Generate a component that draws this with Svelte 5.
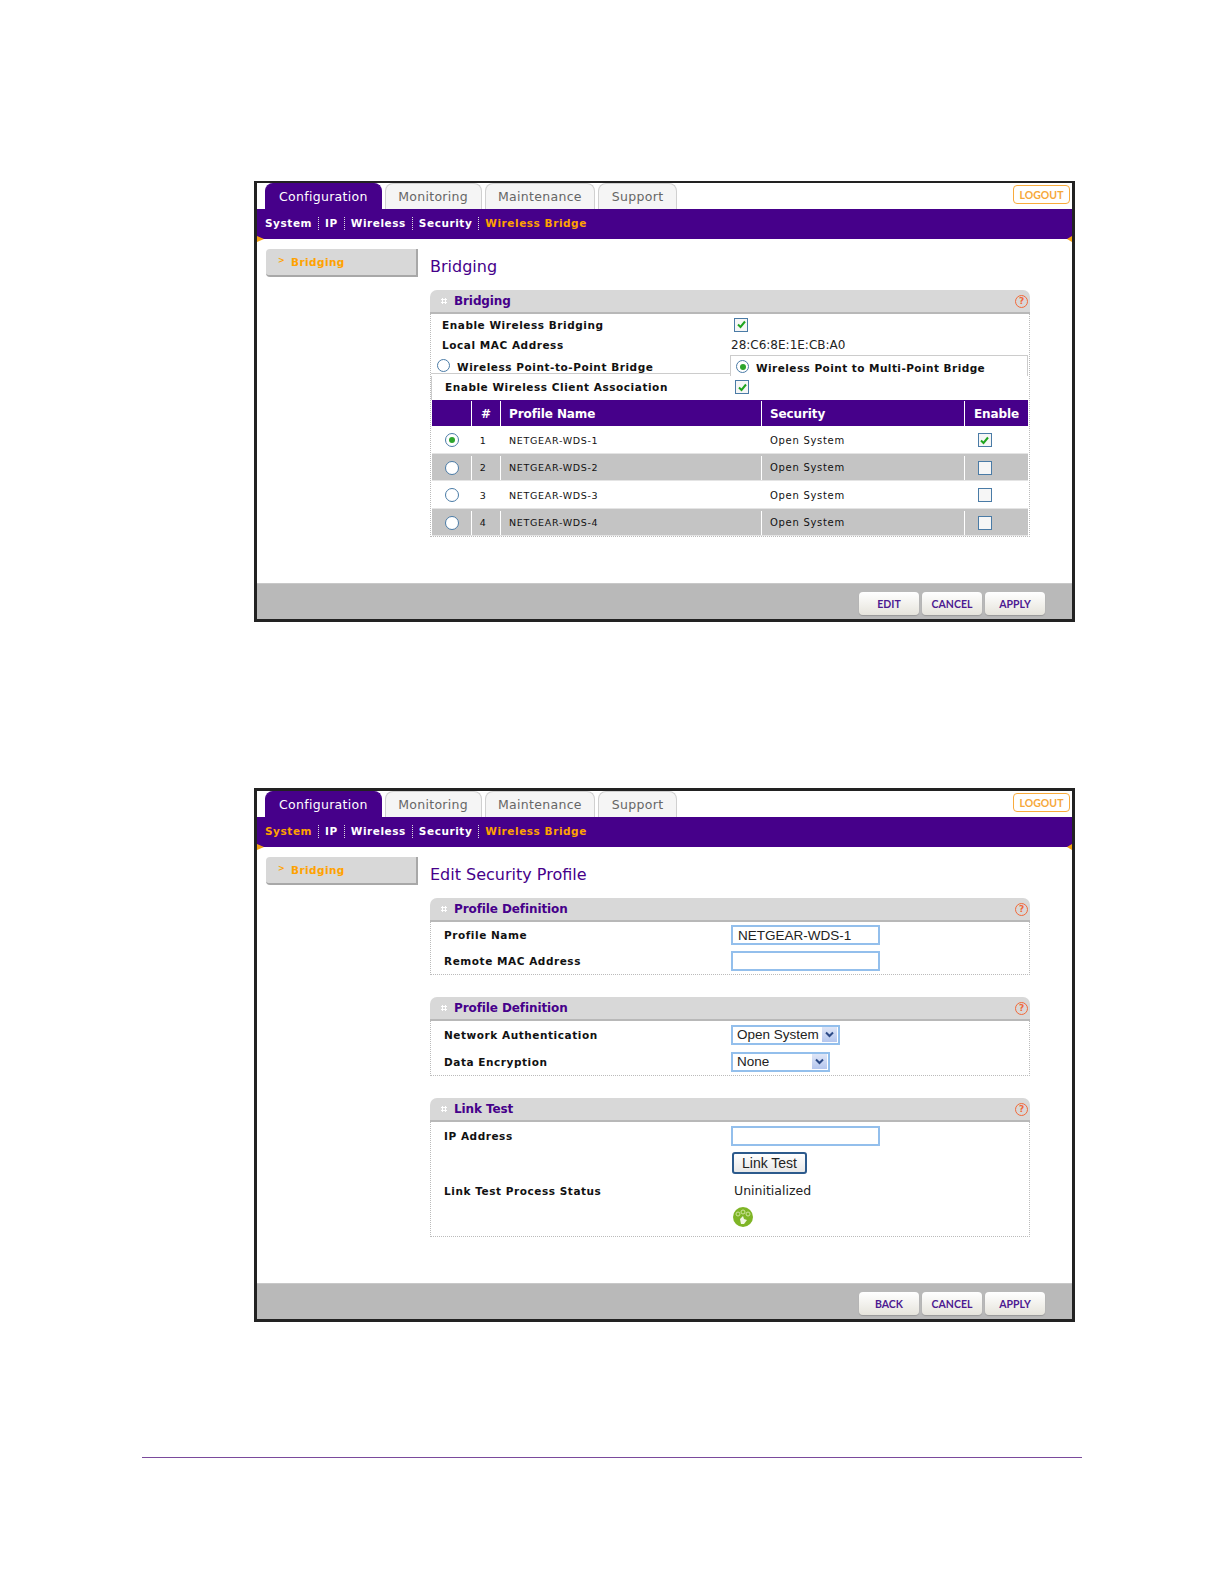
<script>
  const tabs = ['Monitoring', 'Maintenance', 'Support'];
  const subnav = ['System', 'IP', 'Wireless', 'Security', 'Wireless Bridge'];
  const profiles = [1, 2, 3, 4].map((n) => ({
    n,
    name: `NETGEAR-WDS-${n}`,
    security: 'Open System',
    selected: n === 1,
    enabled: n === 1
  }));
</script>

{#snippet check(on)}
  <span class="check">
    {#if on}
      <svg width="9" height="9" viewBox="0 0 9 9"><path d="M1 4.5L3.5 7L8 1.5" fill="none" stroke="#1fa51f" stroke-width="2" /></svg>
    {/if}
  </span>
{/snippet}

{#snippet radio(on)}
  <span class="radio">{#if on}<span class="dot"></span>{/if}</span>
{/snippet}

{#snippet chevron()}
  <span class="arrow">
    <svg width="9" height="7" viewBox="0 0 9 7"><path d="M1 1.5L4.5 5L8 1.5" fill="none" stroke="#2c4a86" stroke-width="2" /></svg>
  </span>
{/snippet}

{#snippet panel(title, body)}
  <section class="panel">
    <header class="panel-head">
      <span class="grip"></span>
      <span class="panel-title">{title}</span>
      <span class="help">?</span>
    </header>
    <div class="panel-body">{@render body()}</div>
  </section>
{/snippet}

{#snippet win(title, systemActive, primary, content)}
  <div class="window" class:second={systemActive}>
    <div class="tabs">
      <span class="tab active">Configuration</span>
      {#each tabs as t}<span class="tab">{t}</span>{/each}
      <span class="logout">LOGOUT</span>
    </div>
    <nav class="subnav">
      {#each subnav as item, i}
        {#if i > 0}<span class="sep"></span>{/if}
        <span class="sublink" class:on={item === 'Wireless Bridge' || (systemActive && item === 'System')}>{item}</span>
      {/each}
    </nav>
    <div class="main">
      <aside class="side"><span class="chev">&gt;</span>Bridging</aside>
      <div class="content">
        <h1>{title}</h1>
        {@render content()}
      </div>
    </div>
    <footer class="foot">
      <button class="btn">{primary}</button>
      <button class="btn">CANCEL</button>
      <button class="btn">APPLY</button>
    </footer>
  </div>
{/snippet}

{#snippet bridgingBody()}
  <div class="row-a">
    <span class="label">Enable Wireless Bridging</span>
    {@render check(true)}
  </div>
  <div class="row-b">
    <span class="label">Local MAC Address</span>
    <span class="value">28:C6:8E:1E:CB:A0</span>
  </div>
  <div class="modes">
    <div class="mode">{@render radio(false)}<span class="label">Wireless Point-to-Point Bridge</span></div>
    <div class="mode current">{@render radio(true)}<span class="label">Wireless Point to Multi-Point Bridge</span></div>
  </div>
  <div class="assoc">
    <span class="label">Enable Wireless Client Association</span>
    {@render check(true)}
  </div>
  <div class="table">
    <div class="tr th">
      <span></span><span class="c">#</span><span>Profile Name</span><span>Security</span><span class="c enable">Enable</span>
    </div>
    {#each profiles as p}
      <div class="tr td" class:alt={p.n % 2 === 0}>
        <span class="c">{@render radio(p.selected)}</span>
        <span class="c num">{p.n}</span>
        <span>{p.name}</span>
        <span class="sec">{p.security}</span>
        <span class="c tick">{@render check(p.enabled)}</span>
      </div>
    {/each}
  </div>
{/snippet}

{#snippet bridging()}
  {@render panel('Bridging', bridgingBody)}
{/snippet}

{#snippet defBody()}
  <div class="form-row h26"><span class="label">Profile Name</span><input class="field" value="NETGEAR-WDS-1" /></div>
  <div class="form-row h26"><span class="label">Remote MAC Address</span><input class="field" value="" /></div>
{/snippet}

{#snippet authBody()}
  <div class="form-row h27">
    <span class="label">Network Authentication</span>
    <span class="select w110">Open System{@render chevron()}</span>
  </div>
  <div class="form-row h27">
    <span class="label">Data Encryption</span>
    <span class="select w100">None{@render chevron()}</span>
  </div>
{/snippet}

{#snippet linkBody()}
  <div class="form-row h28"><span class="label">IP Address</span><input class="field" value="" /></div>
  <div class="form-row h26"><span></span><button class="linktest">Link Test</button></div>
  <div class="form-row h29"><span class="label">Link Test Process Status</span><span class="value status">Uninitialized</span></div>
  <div class="form-row h24">
    <span></span>
    <svg class="linkicon" width="20" height="20" viewBox="0 0 20 20">
      <circle cx="10" cy="10" r="10" fill="#7fb526" />
      <circle cx="5" cy="7" r="2" fill="none" stroke="#cfe59c" stroke-width="1" />
      <circle cx="10" cy="5" r="2" fill="none" stroke="#cfe59c" stroke-width="1" />
      <circle cx="15" cy="7" r="2" fill="none" stroke="#cfe59c" stroke-width="1" />
      <path d="M7 12l3-3 1 3 3 1-3 4H8z" fill="#f2f7e4" />
    </svg>
  </div>
{/snippet}

{#snippet editProfile()}
  {@render panel('Profile Definition', defBody)}
  {@render panel('Profile Definition', authBody)}
  {@render panel('Link Test', linkBody)}
{/snippet}

<div class="page">
  {@render win('Bridging', false, 'EDIT', bridging)}
  <div class="gap"></div>
  {@render win('Edit Security Profile', true, 'BACK', editProfile)}
  <div class="rule"></div>
</div>

<style>
  :global(body) {
    margin: 0;
    background: #fff;
  }

  .page {
    height: 1585px;
    box-sizing: border-box;
    padding: 181px 0 0 254px;
    font-family: "DejaVu Sans", sans-serif;
    overflow: hidden;
  }

  .gap {
    height: 166px;
  }

  .rule {
    height: 1px;
    width: 940px;
    margin: 135px 0 0 -112px;
    background: #7a4a9c;
  }

  .window {
    width: 821px;
    box-sizing: border-box;
    border: 3px solid #222;
    border-top-width: 2px;
    background: #fff;
  }

  .window.second {
    border-top-width: 3px;
  }

  .tabs {
    display: flex;
    align-items: flex-end;
    height: 26px;
    padding-left: 8px;
    gap: 3px;
    position: relative;
  }

  .tab {
    box-sizing: border-box;
    height: 26px;
    padding: 0 12.5px;
    display: flex;
    align-items: center;
    font-size: 12.5px;
    font-weight: 500;
    letter-spacing: 0.3px;
    color: #666;
    background: #f5f5f5;
    border: 1px solid #d0d0d0;
    border-bottom: 0;
    border-radius: 8px 8px 0 0;
  }

  .tab.active {
    color: #fff;
    background: #46008a;
    border-color: #46008a;
    padding: 0 13px;
  }

  .logout {
    position: absolute;
    right: 2px;
    top: 2px;
    width: 57px;
    height: 19px;
    box-sizing: border-box;
    display: flex;
    align-items: center;
    justify-content: center;
    border: 1px solid #f9ab3c;
    border-radius: 4px;
    color: #f6a83a;
    font-family: Lato, sans-serif;
    font-size: 10.5px;
    font-weight: 700;
  }

  .subnav {
    height: 30px;
    box-sizing: border-box;
    display: flex;
    align-items: center;
    padding: 0 0 2px 8px;
    background: #46008a;
    position: relative;
  }

  .subnav::before,
  .subnav::after {
    content: "";
    position: absolute;
    bottom: -3px;
    border-top: 3px solid transparent;
    border-bottom: 3px solid transparent;
  }

  .subnav::before {
    left: 0;
    border-left: 7px solid #f5a312;
  }

  .subnav::after {
    right: 0;
    border-right: 5px solid #f5a312;
  }

  .sublink {
    font-size: 10.5px;
    font-weight: 700;
    letter-spacing: 0.55px;
    color: #fff;
  }

  .sublink.on {
    color: #ffa200;
  }

  .sep {
    height: 13px;
    margin: 0 6px;
    border-left: 1px dotted #ddd;
  }

  .main {
    display: grid;
    grid-template-columns: 152px 600px;
    column-gap: 12px;
    padding: 10px 0 46px 9px;
  }

  .side {
    box-sizing: border-box;
    height: 28px;
    padding-left: 12px;
    display: flex;
    align-items: center;
    gap: 6px;
    background: #d8d8d8;
    border-right: 2px solid #a8a8a8;
    border-bottom: 2px solid #a8a8a8;
    border-radius: 4px 0 0 4px;
    color: #ffa200;
    font-size: 10.5px;
    font-weight: 700;
    letter-spacing: 0.4px;
  }

  .chev {
    font-size: 8px;
    margin-top: -3px;
  }

  h1 {
    margin: 6px 0 11px;
    font-size: 16px;
    line-height: 24px;
    font-weight: 400;
    color: #46008a;
  }

  .panel {
    margin-bottom: 22px;
  }

  .panel:last-child {
    margin-bottom: 0;
  }

  .panel-head {
    box-sizing: border-box;
    height: 24px;
    display: flex;
    align-items: center;
    padding: 0 2px 0 11px;
    background: #d8d8d8;
    border-bottom: 2px solid #b8b8b8;
    border-radius: 7px 7px 0 0;
  }

  .grip {
    width: 6px;
    height: 6px;
    margin-right: 7px;
    background-image: radial-gradient(circle, #fff 1px, transparent 1.2px);
    background-size: 3px 3px;
  }

  .panel-title {
    flex: 1;
    font-size: 12px;
    font-weight: 700;
    letter-spacing: -0.1px;
    color: #46008a;
  }

  .help {
    width: 13px;
    height: 13px;
    box-sizing: border-box;
    border: 1.5px solid #f2693a;
    border-radius: 50%;
    display: flex;
    align-items: center;
    justify-content: center;
    color: #f2693a;
    font-size: 9px;
    font-weight: 700;
  }

  .panel-body {
    padding: 0 1px;
    border: 1px dotted #bbb;
    border-top: 0;
  }

  .label {
    font-size: 10.5px;
    font-weight: 700;
    letter-spacing: 0.55px;
    color: #111;
  }

  .value {
    font-size: 12px;
    color: #222;
  }

  .check {
    box-sizing: border-box;
    width: 14px;
    height: 14px;
    display: inline-flex;
    align-items: center;
    justify-content: center;
    background: #f6f6f6;
    border: 1.5px solid #4a7ba6;
  }

  .radio {
    box-sizing: border-box;
    width: 14px;
    height: 14px;
    flex: none;
    display: inline-flex;
    align-items: center;
    justify-content: center;
    background: #fff;
    border: 1.5px solid #4a7ba6;
    border-radius: 50%;
  }

  .dot {
    width: 6px;
    height: 6px;
    border-radius: 50%;
    background: #2da52d;
  }

  .row-a,
  .row-b {
    display: grid;
    grid-template-columns: 289px auto;
    align-items: center;
    padding-left: 10px;
  }

  .row-a {
    height: 21px;
  }

  .row-a .check {
    margin-left: 3px;
  }

  .row-b {
    height: 19px;
  }

  .modes {
    display: grid;
    grid-template-columns: 298px 1fr;
    height: 22px;
  }

  .mode {
    box-sizing: border-box;
    display: flex;
    align-items: flex-start;
    gap: 7px;
    height: 20px;
    padding-left: 6px;
    margin-left: -1px;
    border-bottom: 1px solid #ccc;
  }

  .mode .radio {
    width: 13px;
    height: 13px;
    margin-top: 5px;
  }

  .mode .label {
    margin-top: 7px;
  }

  .mode.current {
    height: 21px;
    margin: 1px 0 0;
    gap: 7px;
    padding-left: 5px;
    border: 1px solid #ccc;
    border-bottom: 0;
  }

  .mode.current .radio {
    margin-top: 4px;
  }

  .mode.current .label {
    margin-top: 6px;
    letter-spacing: 0.45px;
  }

  .assoc {
    display: grid;
    grid-template-columns: 290px auto;
    align-items: center;
    height: 24px;
    padding: 0 0 2px 13px;
    box-sizing: border-box;
    margin-left: -1px;
    border-left: 1px solid #ccc;
  }

  .tr {
    display: grid;
    grid-template-columns: 39px 29px 261px 203px 1fr;
    align-items: stretch;
  }

  .tr > span {
    display: flex;
    align-items: center;
    padding-left: 8px;
    border-left: 1px solid #fff;
  }

  .tr > span:first-child {
    border-left: 0;
  }

  .tr > span.c {
    padding-left: 0;
    justify-content: center;
  }

  .th {
    height: 26px;
    box-sizing: border-box;
    padding-top: 1px;
    background: #46008a;
    color: #fff;
    font-size: 12px;
    font-weight: 700;
    letter-spacing: -0.1px;
  }

  .td {
    height: 27.5px;
    box-sizing: border-box;
    padding-top: 2px;
    font-size: 9.5px;
    letter-spacing: 0.7px;
    color: #111;
    border-bottom: 1px solid #e4e4e4;
  }

  .td.alt {
    background: #c4c4c4;
  }

  .tr > span.num {
    padding-right: 6px;
  }

  .sec {
    font-size: 10px;
  }

  .tr > span.tick {
    padding-right: 24px;
  }

  .foot {
    height: 36px;
    box-sizing: border-box;
    display: flex;
    justify-content: flex-end;
    align-items: center;
    gap: 3px;
    padding: 4px 27px 0 0;
    background: #b9b9b9;
    border-top: 1px solid #c8c8c8;
  }

  .btn {
    width: 60px;
    height: 23px;
    padding: 0;
    border: 0;
    border-radius: 4px;
    background: linear-gradient(#fff, #e6e4dc);
    color: #4d1a91;
    font-family: Lato, sans-serif;
    font-size: 10.5px;
    font-weight: 700;
    box-shadow: 0 1px 1px #999;
  }

  .form-row {
    display: grid;
    grid-template-columns: 287px auto;
    justify-items: start;
    align-items: center;
    padding-left: 12px;
  }

  .h24 {
    height: 24px;
    margin-bottom: 7px;
  }

  .h26 {
    height: 26px;
  }

  .h27 {
    height: 27px;
  }

  .h28 {
    height: 28px;
  }

  .h29 {
    height: 29px;
  }

  .field {
    box-sizing: border-box;
    width: 149px;
    height: 20px;
    padding: 0 5px;
    border: 2px solid #93bfec;
    background: #fff;
    font-family: "Liberation Sans", sans-serif;
    font-size: 13.5px;
    color: #222;
  }

  .select {
    box-sizing: border-box;
    height: 20px;
    display: flex;
    align-items: center;
    justify-content: space-between;
    padding: 0 1px 0 4px;
    border: 2px solid #93bfec;
    font-family: "Liberation Sans", sans-serif;
    font-size: 13.5px;
    color: #222;
  }

  .w110 {
    width: 109px;
  }

  .w100 {
    width: 99px;
  }

  .arrow {
    width: 15px;
    height: 15px;
    display: flex;
    align-items: center;
    justify-content: center;
    background: linear-gradient(#dfe6f7, #b4c6ee);
  }

  .linktest {
    width: 75px;
    height: 22px;
    margin-left: 1px;
    padding: 0;
    border: 2px solid #2c5a8c;
    border-radius: 3px;
    background: linear-gradient(#fff, #e8e8e8);
    font-family: "Liberation Sans", sans-serif;
    font-size: 14px;
    color: #222;
  }

  .status {
    margin-left: 3px;
    font-size: 12.5px;
  }

  .linkicon {
    margin-left: 2px;
  }
</style>
